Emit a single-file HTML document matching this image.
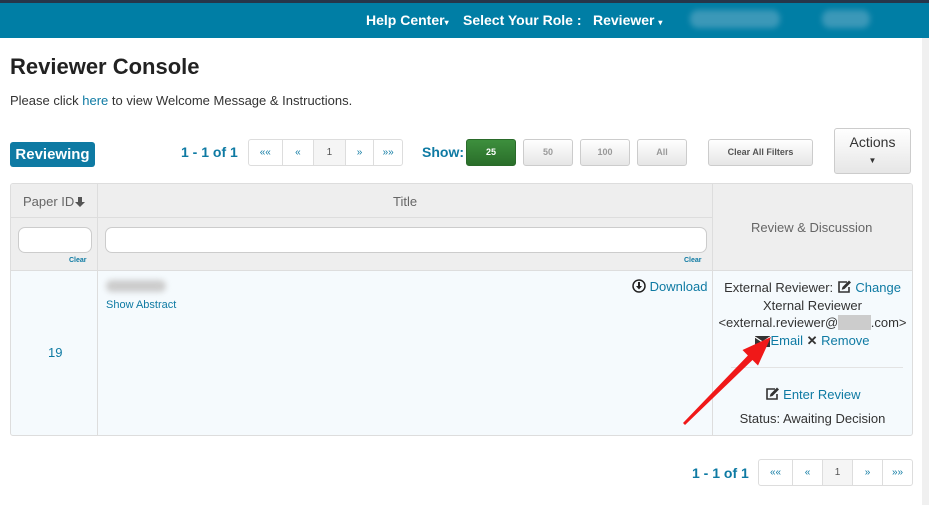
<!DOCTYPE html>
<html><head><style>
*{margin:0;padding:0;box-sizing:border-box}
body{width:929px;height:505px;overflow:hidden;background:#fff;font-family:"Liberation Sans",Arial,sans-serif;color:#333;position:relative;font-size:13px}
.a{position:absolute}
.link{color:#0e7aa3}
.btn{position:absolute;border:1px solid #ccc;border-radius:3px;background:linear-gradient(#fff,#e6e6e6);font-size:9px;color:#999;text-align:center;font-weight:bold}
.pg{position:absolute;display:flex;border:1px solid #ddd;border-radius:3px;height:27px;background:#fff}
.pg span{border-right:1px solid #ddd;font-size:10px;color:#0e7aa3;text-align:center;line-height:25px}
.pg span:last-child{border-right:none}
.th{background:#eee}
svg.i{vertical-align:-2px}
</style></head><body>
<div class="a" style="left:0;top:0;width:929px;height:3px;background:#26364a"></div>
<div class="a" style="left:0;top:3px;width:929px;height:35px;background:#007ea5"></div>
<div class="a" style="left:366px;top:12px;color:#fff;font-size:14px;font-weight:bold">Help Center<span style="font-size:8px">▾</span></div>
<div class="a" style="left:463px;top:12px;color:#fff;font-size:14px;font-weight:bold">Select Your Role :</div>
<div class="a" style="left:593px;top:12px;color:#fff;font-size:14px;font-weight:bold">Reviewer <span style="font-size:8px">▾</span></div>
<div class="a" style="left:690px;top:10px;width:90px;height:18px;background:#3b98b8;border-radius:8px;filter:blur(3px)"></div>
<div class="a" style="left:822px;top:10px;width:48px;height:18px;background:#3b98b8;border-radius:8px;filter:blur(3px)"></div>
<div class="a" style="left:922px;top:38px;width:7px;height:467px;background:#f0f0f0"></div>

<div class="a" style="left:10px;top:54px;font-size:22px;font-weight:bold;color:#222">Reviewer Console</div>
<div class="a" style="left:10px;top:93px">Please click <span class="link">here</span> to view Welcome Message &amp; Instructions.</div>

<div class="a" style="left:10px;top:142px;width:85px;height:25px;background:#0e7aa3;border-radius:3px;color:#fff;font-weight:bold;font-size:15px;text-align:center;line-height:25px">Reviewing</div>
<div class="a" style="left:181px;top:144px;color:#0e7aa3;font-weight:bold;font-size:14px">1 - 1 of 1</div>
<div class="pg" style="left:248px;top:139px;width:155px"><span style="width:34px">««</span><span style="width:32px">«</span><span style="width:32px;background:#f5f5f5;color:#555">1</span><span style="width:29px">»</span><span style="width:28px">»»</span></div>
<div class="a" style="left:422px;top:144px;color:#0e7aa3;font-weight:bold;font-size:14px">Show:</div>
<div class="btn" style="left:466px;top:139px;width:50px;height:27px;line-height:25px;background:linear-gradient(#3d8f3d,#2a6e2a);color:#fff;border-color:#2a6a2a">25</div>
<div class="btn" style="left:523px;top:139px;width:50px;height:27px;line-height:25px">50</div>
<div class="btn" style="left:580px;top:139px;width:50px;height:27px;line-height:25px">100</div>
<div class="btn" style="left:637px;top:139px;width:50px;height:27px;line-height:25px">All</div>
<div class="btn" style="left:708px;top:139px;width:105px;height:27px;line-height:25px;color:#555">Clear All Filters</div>
<div class="btn" style="left:834px;top:128px;width:77px;height:46px;font-size:14px;font-weight:normal;color:#333;padding-top:5px">Actions<br><span style="font-size:8px">▼</span></div>

<div class="a" style="left:10px;top:183px;width:903px;height:253px;border:1px solid #ddd;border-radius:3px;overflow:hidden;background:#f5fafd">
 <div class="a th" style="left:0;top:0;width:901px;height:86px"></div>
 <div class="a" style="left:0;top:33px;width:701px;height:1px;background:#ddd"></div>
 <div class="a" style="left:0;top:86px;width:901px;height:1px;background:#ddd"></div>
 <div class="a" style="left:86px;top:0;width:1px;height:253px;background:#ddd"></div>
 <div class="a" style="left:701px;top:0;width:1px;height:253px;background:#ddd"></div>
 <div class="a" style="left:12px;top:10px;color:#666;font-size:13px">Paper ID<svg class="i" width="12" height="12" viewBox="0 0 12 12"><path d="M4 1h4v5h3l-5 5-5-5h3z" fill="#555"/></svg></div>
 <div class="a" style="left:382px;top:10px;color:#666">Title</div>
 <div class="a" style="left:740px;top:36px;color:#666">Review &amp; Discussion</div>
 <div class="a" style="left:7px;top:43px;width:74px;height:26px;background:#fff;border:1px solid #ccc;border-radius:7px"></div>
 <div class="a" style="left:94px;top:43px;width:602px;height:26px;background:#fff;border:1px solid #ccc;border-radius:7px"></div>
 <div class="a link" style="left:58px;top:73px;font-size:7px;font-weight:bold">Clear</div>
 <div class="a link" style="left:673px;top:73px;font-size:7px;font-weight:bold">Clear</div>
 <div class="a link" style="left:37px;top:161px;font-size:13px">19</div>
 <div class="a" style="left:95px;top:96px;width:60px;height:12px;background:#ccc;border-radius:6px;filter:blur(3px)"></div>
 <div class="a link" style="left:95px;top:115px;font-size:11px">Show Abstract</div>
 <div class="a link" style="left:621px;top:95px;font-size:13px"><svg class="i" width="14" height="14" viewBox="0 0 14 14"><circle cx="7" cy="7" r="6" fill="none" stroke="#222" stroke-width="1.5"/><path d="M6 3h2v4h2l-3 3.5L4 7h2z" fill="#222"/></svg> Download</div>
 <div class="a" style="left:702px;top:95px;width:199px;text-align:center;line-height:17.5px;font-size:13px">External Reviewer: <span class="link"><svg class="i" width="15" height="14" viewBox="0 0 15 14"><path d="M10 2H2v10h10V7" fill="none" stroke="#333" stroke-width="1.6"/><path d="M12 0.5l2 2-6.5 6.5-2.8.8.8-2.8z" fill="#333"/></svg> Change</span><br>Xternal Reviewer<br>&lt;external.reviewer@<span style="color:#ccc;background:#ccc">xxxxx</span>.com&gt;<br><svg class="i" width="15" height="12" viewBox="0 0 15 12"><rect x="0" y="1" width="15" height="11" fill="#333"/><path d="M0 2l7.5 5 7.5-5" fill="none" stroke="#fff" stroke-width="1.2"/></svg><span class="link">Email</span> <b>✕</b> <span class="link">Remove</span></div>
 <div class="a" style="left:720px;top:183px;width:172px;height:1px;background:#e3e3e3"></div>
 <div class="a" style="left:702px;top:203px;width:199px;text-align:center;font-size:13px"><span class="link"><svg class="i" width="15" height="14" viewBox="0 0 15 14"><path d="M10 2H2v10h10V7" fill="none" stroke="#333" stroke-width="1.6"/><path d="M12 0.5l2 2-6.5 6.5-2.8.8.8-2.8z" fill="#333"/></svg> Enter Review</span></div>
 <div class="a" style="left:702px;top:227px;width:199px;text-align:center;font-size:13px">Status: Awaiting Decision</div>
</div>
<svg class="a" style="left:680px;top:330px" width="100" height="100"><path d="M3 93 L67.9 25.5 L62.5 20 L91 7 L78 35.5 L72.5 30 L5 95 Z" fill="#f01818"/></svg>

<div class="a" style="left:692px;top:465px;color:#0e7aa3;font-weight:bold;font-size:14px">1 - 1 of 1</div>
<div class="pg" style="left:758px;top:459px;width:155px"><span style="width:34px">««</span><span style="width:30px">«</span><span style="width:30px;background:#f5f5f5;color:#555">1</span><span style="width:30px">»</span><span style="width:29px">»»</span></div>
</body></html>
